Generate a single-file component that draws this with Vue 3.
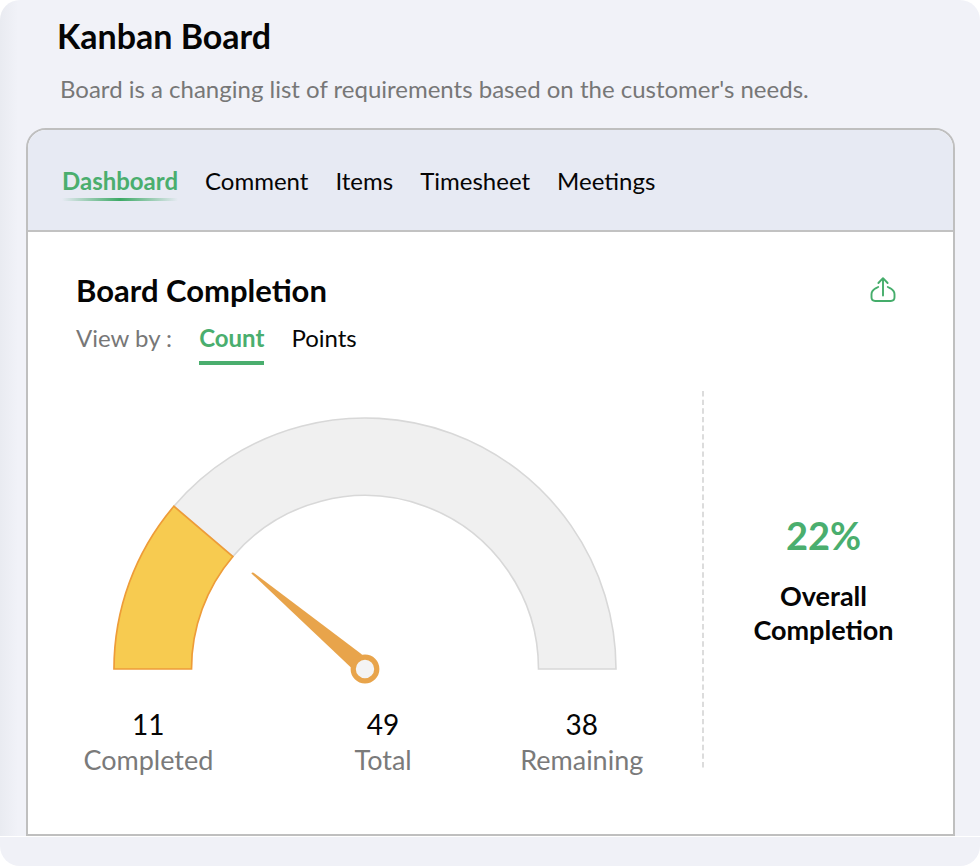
<script setup>
import { ref, computed } from 'vue'

const tabs = ['Dashboard', 'Comment', 'Items', 'Timesheet', 'Meetings']
const activeTab = ref('Dashboard')

const views = ['Count', 'Points']
const activeView = ref('Count')

const completed = 11
const total = 49
const stats = [
  { value: completed, label: 'Completed' },
  { value: total, label: 'Total' },
  { value: total - completed, label: 'Remaining' },
]
const percent = Math.round((completed / total) * 100)

// Gauge geometry, in viewBox units
const cx = 252
const cy = 252
const outer = 251
const inner = 173.5

function point(radius, share) {
  const a = Math.PI * (1 - share)
  return `${(cx + radius * Math.cos(a)).toFixed(2)} ${(cy - radius * Math.sin(a)).toFixed(2)}`
}
function band(from, to) {
  return `M${point(outer, from)} A${outer} ${outer} 0 0 1 ${point(outer, to)} L${point(inner, to)} A${inner} ${inner} 0 0 0 ${point(inner, from)} Z`
}
const share = completed / total
const trackPath = computed(() => band(share, 1))
const donePath = computed(() => band(0, share))
</script>

<template>
  <div class="page">
    <main class="board">
      <header class="intro">
        <h1>Kanban Board</h1>
        <p>Board is a changing list of requirements based on the customer's needs.</p>
      </header>

      <section class="card">
        <nav class="tabs" aria-label="Board sections">
          <a
            v-for="tab in tabs"
            :key="tab"
            href="#"
            class="tab"
            :class="{ active: tab === activeTab }"
            @click.prevent="activeTab = tab"
          >{{ tab }}</a>
        </nav>

        <div class="body">
          <div class="heading">
            <h2>Board Completion</h2>
            <button type="button" class="share" aria-label="Export">
              <svg viewBox="0 0 26 26" fill="none" stroke="currentColor" stroke-width="1.9" stroke-linecap="round" stroke-linejoin="round">
                <path d="M13 18.5V1.5M8.4 6L13 1.2L17.6 6" />
                <path d="M8.2 10L5.6 11.3Q1.5 13.8 1.5 17.2V20.3Q1.5 24 5.2 24H20.8Q24.5 24 24.5 20.3V17.2Q24.5 13.8 20.4 11.3L17.8 10" />
              </svg>
            </button>
          </div>

          <div class="viewby">
            <span>View by :</span>
            <button
              v-for="view in views"
              :key="view"
              type="button"
              class="view"
              :class="{ active: view === activeView }"
              @click="activeView = view"
            >{{ view }}</button>
          </div>

          <div class="content">
            <div class="chart">
              <svg class="gauge" viewBox="0 0 504 268" role="img" aria-label="Completion gauge">
                <path :d="trackPath" fill="#f0f0f0" stroke="#d8d8d8" stroke-width="1.6" />
                <path :d="donePath" fill="#f7cb50" stroke="#ee9c38" stroke-width="1.7" />
                <path d="M138.4 156.4Q139 155 140.6 155.8L249 237.5L238.5 251Z" fill="#e8a44b" />
                <circle cx="252" cy="252" r="11.8" fill="#f4f4f4" stroke="#e8a44b" stroke-width="5.2" />
              </svg>
              <dl class="stats">
                <div v-for="stat in stats" :key="stat.label" class="stat">
                  <dt>{{ stat.label }}</dt>
                  <dd>{{ stat.value }}</dd>
                </div>
              </dl>
            </div>
            <svg class="divider" aria-hidden="true">
              <line x1="1" y1="0" x2="1" y2="100%" stroke="#dcdcdc" stroke-width="2" stroke-dasharray="5.4 3.23" />
            </svg>
            <div class="overall">
              <strong>{{ percent }}%</strong>
              <p>Overall<br>Completion</p>
            </div>
          </div>
        </div>
      </section>
    </main>
    <footer class="base"></footer>
  </div>
</template>

<style>
body {
  margin: 0;
  background: #fff;
}
</style>

<style scoped>
.page {
  font-family: Lato, "Liberation Sans", sans-serif;
  color: #050505;
}
h1, h2, p, dl, dd {
  margin: 0;
}
button {
  border: 0;
  padding: 0;
  background: none;
  font: inherit;
  color: inherit;
  cursor: pointer;
}
.board {
  padding: 15px 25px 0 26px;
  border-radius: 20px 20px 0 0;
  background: linear-gradient(90deg, #e9ebf1 0, #f1f2f8 18px);
}
.intro {
  padding: 0 31px;
}
h1 {
  font-size: 34px;
  line-height: 42px;
  font-weight: 700;
}
.intro p {
  margin: 16px 0 0 3px;
  font-size: 24px;
  line-height: 32px;
  color: #777;
}
.card {
  margin-top: 23px;
  border: 2px solid #bfbfbf;
  border-radius: 20px 20px 0 0;
  background: #fff;
  overflow: hidden;
}
.tabs {
  display: flex;
  gap: 27px;
  padding: 35px 34px 28px;
  border-bottom: 2px solid #c2c2c2;
  background: #e7eaf3;
}
.tab {
  position: relative;
  padding-bottom: 5px;
  font-size: 24px;
  line-height: 32px;
  color: inherit;
  text-decoration: none;
}
.tab.active {
  font-weight: 700;
  color: #4aae6e;
}
.tab.active::after {
  content: "";
  position: absolute;
  left: 0;
  right: 0;
  bottom: 1px;
  height: 3px;
  background: linear-gradient(90deg, transparent, #3ca965 50%, transparent);
}
.body {
  padding: 38px 48px 56px;
}
.heading {
  display: flex;
  justify-content: space-between;
  align-items: center;
  padding-right: 9px;
}
h2 {
  font-size: 31px;
  line-height: 40px;
  font-weight: 700;
}
.share {
  width: 26px;
  height: 26px;
  color: #45ad6b;
}
.share svg {
  display: block;
  width: 26px;
  height: 26px;
  overflow: visible;
}
.viewby {
  display: flex;
  gap: 27px;
  margin-top: 12px;
  font-size: 24px;
  line-height: 32px;
  color: #777;
}
.view {
  padding-bottom: 7px;
  border-bottom: 4px solid transparent;
  color: #050505;
}
.view.active {
  border-color: #4aae6e;
  font-weight: 700;
  color: #4aae6e;
}
.content {
  display: flex;
  margin: 26px -38px 0 0;
}
.chart {
  flex: 1;
  padding-top: 26px;
}
.gauge {
  display: block;
  width: 504px;
  max-width: 100%;
  margin-left: 37px;
}
.stats {
  display: grid;
  grid-template-columns: 6fr 7fr 4fr;
  margin: 21px 48px 0 -36px;
}
.stat {
  display: flex;
  flex-direction: column-reverse;
  align-items: center;
  font-size: 28px;
  line-height: 36px;
}
.stat dt {
  font-size: 27px;
  color: #7a7a7a;
}
.divider {
  width: 2px;
  height: 378px;
}
.overall {
  width: 239px;
  display: flex;
  flex-direction: column;
  align-items: center;
  text-align: center;
  padding-top: 120px;
}
.overall strong {
  font-size: 38px;
  line-height: 48px;
  font-weight: 700;
  color: #4aae6e;
}
.overall p {
  margin-top: 20px;
  font-size: 27px;
  line-height: 34px;
  font-weight: 700;
}
.base {
  height: 29px;
  margin-top: 1px;
  border-radius: 0 0 20px 20px;
  background: #f0f1f7;
}
</style>
